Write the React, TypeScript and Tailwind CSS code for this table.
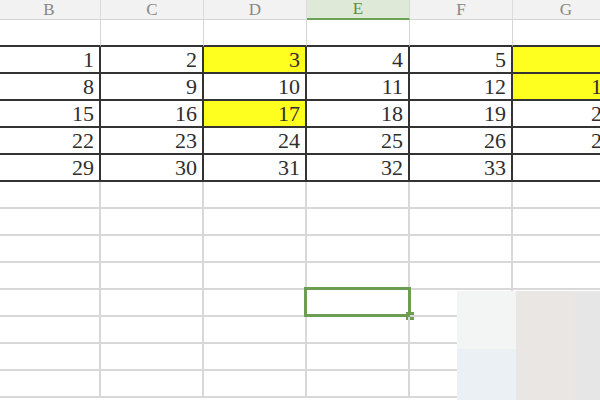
import React from "react";

const COLS = ["B", "C", "D", "E", "F", "G"];
const DATA: (number | null)[][] = [
  [1, 2, 3, 4, 5, 6],
  [8, 9, 10, 11, 12, 13],
  [15, 16, 17, 18, 19, 20],
  [22, 23, 24, 25, 26, 27],
  [29, 30, 31, 32, 33, null],
];
const YELLOW = new Set(["0-2", "0-5", "1-5", "2-2"]);

function colW(ci: number) {
  return ci === 5 ? "w-[107px]" : "w-[103px]";
}

export default function App() {
  const emptyRows = Array.from({ length: 8 });
  return (
    <div
      className="relative w-[600px] h-[400px] overflow-hidden bg-white"
      style={{ fontFamily: '"Liberation Serif", "DejaVu Serif", serif' }}
    >
      <div className="ml-[-2px] w-[622px]">
        {/* header */}
        <div className="flex h-[20px]">
          {COLS.map((c, ci) => (
            <div
              key={c}
              className={
                colW(ci) +
                (c === "E"
                  ? " shrink-0 flex items-center justify-center bg-[#dfe9d8] border-r border-[#d6d6d6] border-b-2 border-b-[#6ca253] text-[#5c8d42] text-[17px]"
                  : " shrink-0 flex items-center justify-center bg-[#f2f2f2] border-r border-[#dcdcdc] border-b border-b-[#d4d4d4] text-[#878787] text-[17px]")
              }
            >
              {c}
            </div>
          ))}
        </div>
        {/* empty row 1 */}
        <div className="flex h-[27px]">
          {COLS.map((c, ci) => (
            <div
              key={c}
              className={colW(ci) + " shrink-0 border-r border-r-[#d6d6d6] border-b-2 border-b-[#333333]"}
            />
          ))}
        </div>
        {/* data rows */}
        {DATA.map((row, ri) => (
          <div key={ri} className="flex h-[27px]">
            {row.map((v, ci) => (
              <div
                key={ci}
                className={
                  colW(ci) +
                  " shrink-0 flex items-center justify-end pr-[5px] border-r-2 border-b-2 border-[#333333] text-[22px] leading-none text-[#2e2e2e] " +
                  (YELLOW.has(`${ri}-${ci}`) ? "bg-[#ffff1f]" : "bg-white")
                }
              >
                {v}
              </div>
            ))}
          </div>
        ))}
        {/* empty rows */}
        {emptyRows.map((_, ri) => (
          <div key={ri} className="flex h-[27px]">
            {COLS.map((c, ci) => (
              <div
                key={c}
                className={colW(ci) + " relative shrink-0 border-r-2 border-b-2 border-[#d8d8d8]"}
              >
                {ri === 4 && c === "E" && (
                  <div className="absolute left-[-3px] top-[-3px] w-[107px] h-[30px] border-[3px] border-[#6b9e53]">
                    <div className="absolute right-[-6px] bottom-[-6px] w-[8px] h-[8px] bg-[#6b9e53]" />
                  </div>
                )}
              </div>
            ))}
          </div>
        ))}
      </div>
      {/* light overlay blocks at bottom-right */}
      <div className="absolute left-[457px] top-[291px] w-[143px] h-[109px] flex">
        <div className="w-[59px] flex flex-col">
          <div className="h-[58px] bg-[#f3f4f4]" />
          <div className="flex-1 bg-[#eaf0f3]" />
        </div>
        <div className="w-[59px] bg-[#e9e6e3]" />
        <div className="flex-1 bg-[#e6e6e6]" />
      </div>
    </div>
  );
}
